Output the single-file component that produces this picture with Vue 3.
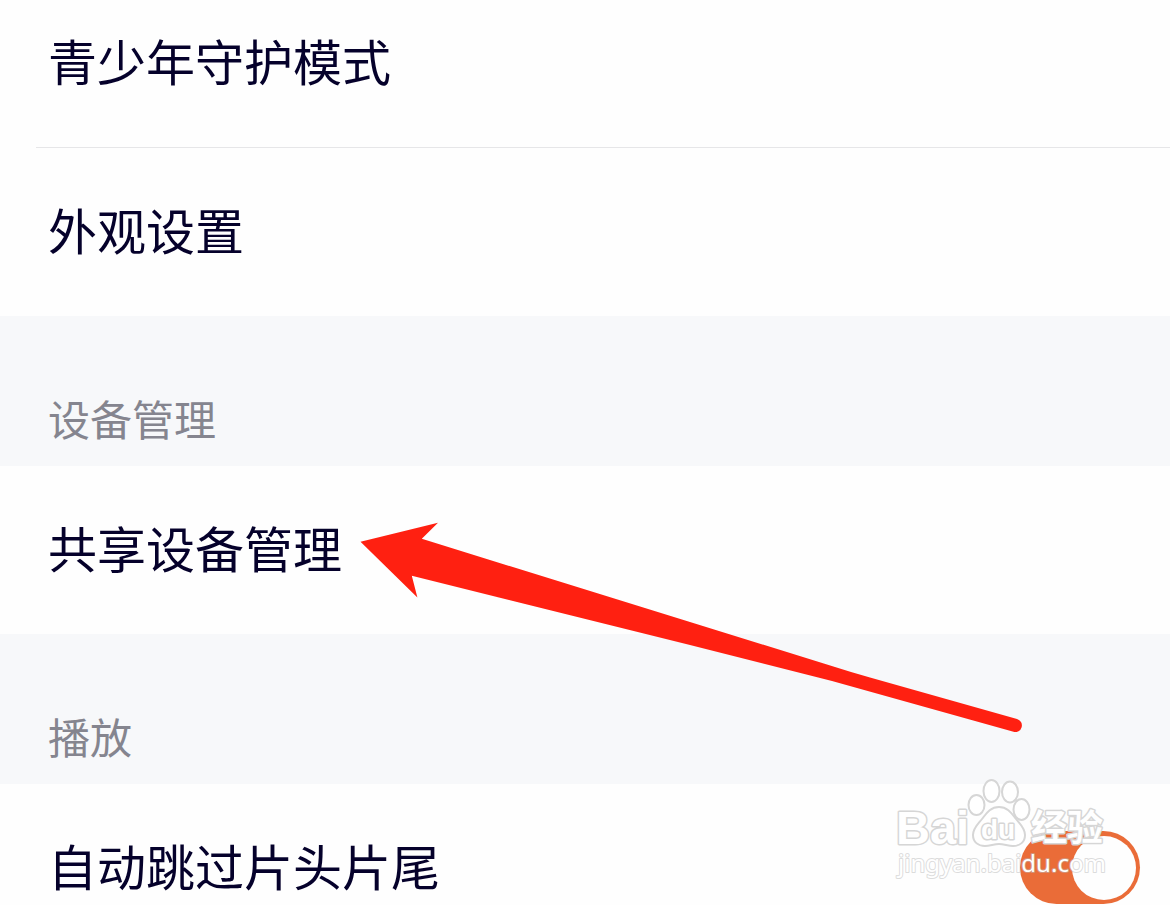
<script setup>
import { ref } from 'vue'

const skipIntro = ref(true)
</script>

<template>
  <main class="page">
    <section class="group">
      <button type="button" class="row first">青少年守护模式</button>
      <hr class="divider" />
      <button type="button" class="row">外观设置</button>
    </section>

    <h2 class="heading">设备管理</h2>
    <section class="group">
      <button type="button" class="row">共享设备管理</button>
    </section>

    <h2 class="heading">播放</h2>
    <section class="group toggle-row">
      <label class="toggle-label" for="skip-intro">自动跳过片头片尾</label>
      <input id="skip-intro" v-model="skipIntro" class="switch" type="checkbox" role="switch" />
    </section>

    <svg class="arrow" viewBox="360 520 666 216" aria-hidden="true">
      <path
        d="M360.5 541.7 L438 522.8 L421.8 538.8 L690 622 L835 667 Q852 672.5 870 677.5 L1017 719 A6.6 6.6 0 0 1 1013.5 731.8 L832 681 L690 645 L411.8 575.8 L417.4 597.4 Z"
        fill="#ff2011"
      />
    </svg>

    <svg class="watermark" viewBox="890 774 220 112" role="img" aria-label="Baidu 经验 jingyan.baidu.com">
      <g class="outline">
        <text x="896" y="844" class="brand" font-size="47">Bai</text>
        <text x="1031" y="841" class="cjk" font-size="36">经验</text>
        <text x="898" y="872" class="site" font-size="24">jingyan.baidu.com</text>
      </g>
      <g class="paw">
        <ellipse cx="976.5" cy="805" rx="8" ry="10" />
        <ellipse cx="991.5" cy="791" rx="8" ry="11" />
        <ellipse cx="1010" cy="792" rx="8" ry="10.5" />
        <ellipse cx="1021.5" cy="809.5" rx="8" ry="10.5" />
        <path
          d="M999 807 C990 807 986 814 982 819 C978 824 973 828 973 835 C973 842 978 846 985 846 C990 846 994 844 999 844 C1004 844 1008 846 1013 846 C1020 846 1025 842 1025 835 C1025 828 1020 824 1016 819 C1012 814 1008 807 999 807 Z"
        />
        <text x="981" y="839" class="brand" font-size="28">du</text>
      </g>
    </svg>
  </main>
</template>

<style>
body {
  margin: 0;
  background: #fefefe;
}
</style>

<style scoped>
.page {
  position: relative;
  height: 100vh;
  overflow: hidden;
  background: #fefefe;
  color: #05012b;
  font-family: "Noto Sans CJK SC", "Noto Sans", sans-serif;
}

.group {
  display: flex;
  flex-direction: column;
}

.row {
  box-sizing: border-box;
  width: 100%;
  margin: 0;
  padding: 57px 48px 63px;
  border: 0;
  background: transparent;
  color: inherit;
  font: inherit;
  font-size: 49px;
  line-height: 48px;
  text-align: left;
  cursor: pointer;
}

.first {
  padding-top: 36px;
}

.divider {
  align-self: stretch;
  height: 1px;
  margin: 0 0 0 36px;
  border: 0;
  background: #e6e6e8;
}

.heading {
  margin: 0;
  padding: 78px 48px 24px;
  background: #f7f8fa;
  color: #85858f;
  font-size: 42px;
  font-weight: 400;
  line-height: 48px;
}

.toggle-row {
  flex-direction: row;
  align-items: flex-start;
  justify-content: space-between;
  padding: 47px 30px 48px 48px;
}

.toggle-label {
  padding-top: 10px;
  font-size: 49px;
  line-height: 48px;
}

.switch {
  appearance: none;
  display: flex;
  flex: none;
  align-items: center;
  box-sizing: border-box;
  width: 120px;
  height: 73px;
  margin: 0;
  padding: 0 4px;
  border-radius: 37px;
  background: #d5d5da;
  cursor: pointer;
}

.switch::before {
  content: "";
  width: 64px;
  height: 64px;
  border-radius: 50%;
  background: #fefefe;
}

.switch:checked {
  justify-content: flex-end;
  background: #ea6c38;
}

.arrow {
  position: absolute;
  top: 520px;
  left: 360px;
  width: 666px;
  height: 216px;
  pointer-events: none;
}

.watermark {
  position: absolute;
  top: 774px;
  right: 60px;
  width: 220px;
  height: 112px;
  pointer-events: none;
}

.outline text,
.paw text {
  fill: #ffffff;
  stroke: #d6d6d6;
  stroke-width: 3px;
  stroke-linejoin: round;
  paint-order: stroke;
}

.outline .site {
  stroke-width: 2px;
  stroke: #bbbbbb;
  stroke-opacity: 0.5;
}

.paw ellipse,
.paw path {
  fill: #ffffff;
  stroke: #d6d6d6;
  stroke-width: 2px;
}

.brand {
  font-family: "Liberation Sans", Arial, sans-serif;
  font-weight: 700;
}

.cjk {
  font-family: "Noto Sans CJK SC", sans-serif;
  font-weight: 700;
}

.site {
  font-family: "Noto Sans", sans-serif;
  font-weight: 400;
}
</style>
